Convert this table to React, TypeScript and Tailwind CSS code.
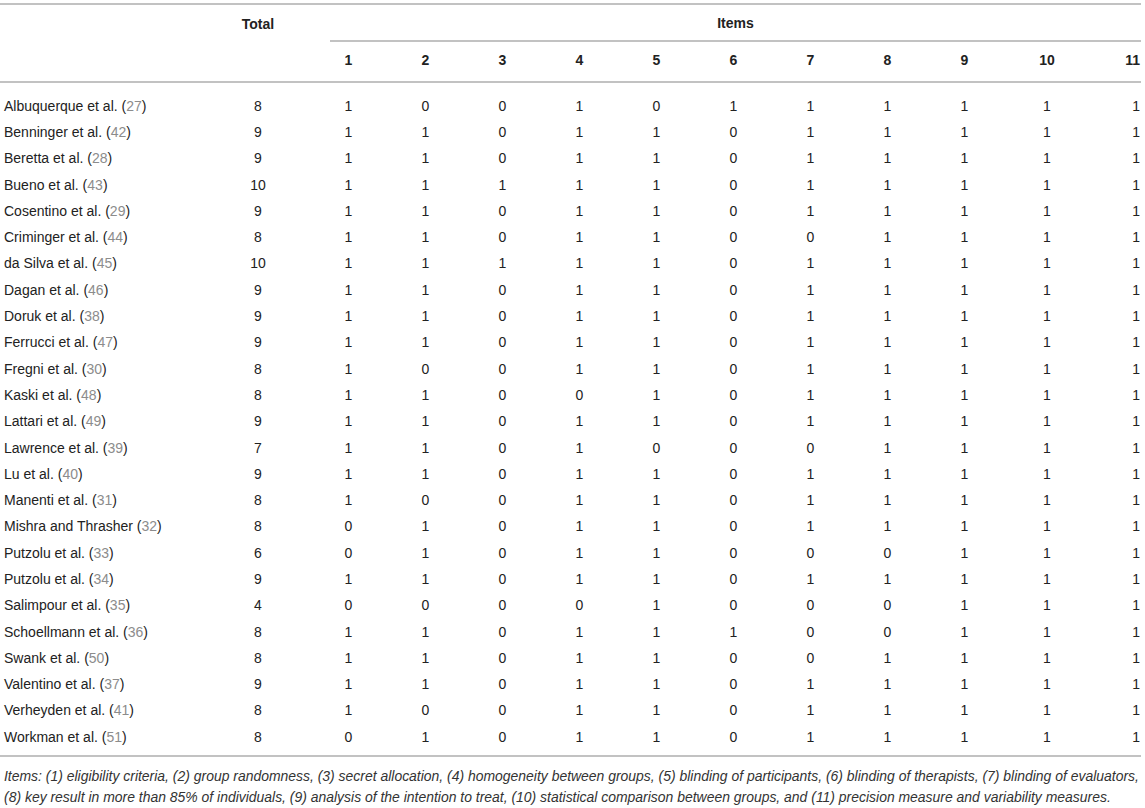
const rows: [string, string, number, number[]][] = [
  ['Albuquerque et al.', '27', 8, [1, 0, 0, 1, 0, 1, 1, 1, 1, 1, 1]],
  ['Benninger et al.', '42', 9, [1, 1, 0, 1, 1, 0, 1, 1, 1, 1, 1]],
  ['Beretta et al.', '28', 9, [1, 1, 0, 1, 1, 0, 1, 1, 1, 1, 1]],
  ['Bueno et al.', '43', 10, [1, 1, 1, 1, 1, 0, 1, 1, 1, 1, 1]],
  ['Cosentino et al.', '29', 9, [1, 1, 0, 1, 1, 0, 1, 1, 1, 1, 1]],
  ['Criminger et al.', '44', 8, [1, 1, 0, 1, 1, 0, 0, 1, 1, 1, 1]],
  ['da Silva et al.', '45', 10, [1, 1, 1, 1, 1, 0, 1, 1, 1, 1, 1]],
  ['Dagan et al.', '46', 9, [1, 1, 0, 1, 1, 0, 1, 1, 1, 1, 1]],
  ['Doruk et al.', '38', 9, [1, 1, 0, 1, 1, 0, 1, 1, 1, 1, 1]],
  ['Ferrucci et al.', '47', 9, [1, 1, 0, 1, 1, 0, 1, 1, 1, 1, 1]],
  ['Fregni et al.', '30', 8, [1, 0, 0, 1, 1, 0, 1, 1, 1, 1, 1]],
  ['Kaski et al.', '48', 8, [1, 1, 0, 0, 1, 0, 1, 1, 1, 1, 1]],
  ['Lattari et al.', '49', 9, [1, 1, 0, 1, 1, 0, 1, 1, 1, 1, 1]],
  ['Lawrence et al.', '39', 7, [1, 1, 0, 1, 0, 0, 0, 1, 1, 1, 1]],
  ['Lu et al.', '40', 9, [1, 1, 0, 1, 1, 0, 1, 1, 1, 1, 1]],
  ['Manenti et al.', '31', 8, [1, 0, 0, 1, 1, 0, 1, 1, 1, 1, 1]],
  ['Mishra and Thrasher', '32', 8, [0, 1, 0, 1, 1, 0, 1, 1, 1, 1, 1]],
  ['Putzolu et al.', '33', 6, [0, 1, 0, 1, 1, 0, 0, 0, 1, 1, 1]],
  ['Putzolu et al.', '34', 9, [1, 1, 0, 1, 1, 0, 1, 1, 1, 1, 1]],
  ['Salimpour et al.', '35', 4, [0, 0, 0, 0, 1, 0, 0, 0, 1, 1, 1]],
  ['Schoellmann et al.', '36', 8, [1, 1, 0, 1, 1, 1, 0, 0, 1, 1, 1]],
  ['Swank et al.', '50', 8, [1, 1, 0, 1, 1, 0, 0, 1, 1, 1, 1]],
  ['Valentino et al.', '37', 9, [1, 1, 0, 1, 1, 0, 1, 1, 1, 1, 1]],
  ['Verheyden et al.', '41', 8, [1, 0, 0, 1, 1, 0, 1, 1, 1, 1, 1]],
  ['Workman et al.', '51', 8, [0, 1, 0, 1, 1, 0, 1, 1, 1, 1, 1]],
]

const grid = 'grid grid-cols-[206px_104px_repeat(9,77px)_88px_50px]'

export default function App() {
  return (
    <div className="w-[1141px] pt-[3px] bg-white text-[#222] text-[14px] font-['Liberation_Sans',Arial,sans-serif]">
      {/* Header */}
      <div className="border-t-2 border-[#c2c2c2]">
        <div className={`${grid} h-[37px] pt-[1px] items-center font-bold`}>
          <div />
          <div className="text-center">Total</div>
          <div className="col-span-11 self-stretch flex items-center justify-center ml-[20px] border-b-2 border-[#c2c2c2]">
            Items
          </div>
        </div>
        <div className={`${grid} h-[41px] pb-[2px] items-center font-bold border-b-2 border-[#c2c2c2]`}>
          <div />
          <div />
          {Array.from({ length: 11 }, (_, i) => (
            <div key={i} className={i === 10 ? 'text-right pr-[1px]' : 'text-center'}>
              {i + 1}
            </div>
          ))}
        </div>
      </div>

      {/* Body */}
      <div className="pt-[10px] pb-[5px] border-b-2 border-[#c2c2c2]">
        {rows.map(([name, ref, total, items], r) => (
          <div key={r} className={`${grid} h-[26.3px] items-center`}>
            <div className="pl-[4px] whitespace-nowrap">
              {name} (<span className="text-[#8c8c8c]">{ref}</span>)
            </div>
            <div className="text-center">{total}</div>
            {items.map((v, i) => (
              <div key={i} className={i === 10 ? 'text-right pr-[1px]' : 'text-center'}>
                {v}
              </div>
            ))}
          </div>
        ))}
      </div>

      {/* Footnote */}
      <p className="pt-[9px] pl-[4px] italic leading-[21px] text-[13.95px] text-[#333] whitespace-nowrap">
        Items: (1) eligibility criteria, (2) group randomness, (3) secret allocation, (4) homogeneity between groups, (5)
        blinding of participants, (6) blinding of therapists, (7) blinding of evaluators,
        <br />
        (8) key result in more than 85% of individuals, (9) analysis of the intention to treat, (10) statistical comparison
        between groups, and (11) precision measure and variability measures.
      </p>
    </div>
  )
}
